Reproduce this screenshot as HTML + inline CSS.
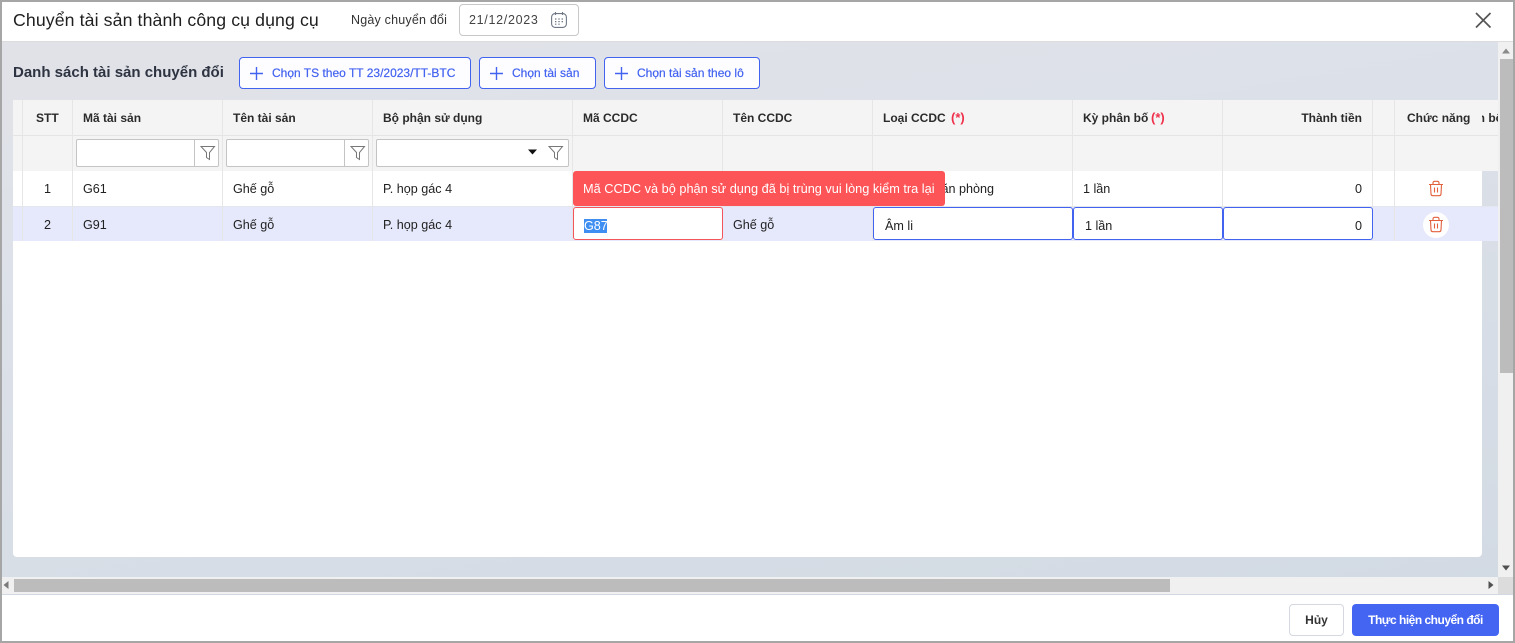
<!DOCTYPE html>
<html lang="vi"><head><meta charset="utf-8"><title>Chuyển tài sản thành công cụ dụng cụ</title>
<style>
*{box-sizing:border-box}
html,body{margin:0;padding:0;width:1515px;height:643px;overflow:hidden;background:#fff;font-family:"Liberation Sans",sans-serif;color:#212121}
.a{position:absolute}
.t{position:absolute;white-space:nowrap;font-size:12.6px;line-height:16px}
.b{font-weight:700;color:#2b2b2b;font-size:12px}
.btn{position:absolute;top:57px;height:32px;border:1px solid #4262f0;border-radius:4px;background:#fdfdff;color:#4262f0;font-size:12px;line-height:30px;white-space:nowrap;-webkit-text-stroke:.2px #4262f0}
.btn span{position:absolute;top:0}
.v{position:absolute;width:1px;background:#e6e6e6}
.inp{position:absolute;background:#fff;border:1px solid #c4c4c4;border-radius:2px}
.cell{position:absolute;top:207px;height:33px;background:#fff;border:1px solid #4262f0;border-radius:3px}
</style></head><body>
<div class="a" style="left:0;top:0;width:1515px;height:643px;background:#fff"></div>

<!-- body background -->
<div class="a" style="left:2px;top:41px;width:1511px;height:554px;background:linear-gradient(170deg,#e1e2e7 0%,#dde1e9 30%,#d2dae3 100%)"></div>
<div class="a" style="left:2px;top:41px;width:1511px;height:1px;background:#dcdcdc"></div>

<!-- header -->
<div class="t" style="left:13px;top:8px;font-size:17.7px;line-height:24px;color:#1f1f1f;letter-spacing:.11px">Chuyển tài sản thành công cụ dụng cụ</div>
<div class="t" style="left:351px;top:12px;font-size:12.5px;color:#333;letter-spacing:.2px">Ngày chuyển đổi</div>
<div class="a" style="left:459px;top:4px;width:120px;height:32px;border:1px solid #c8c8c8;border-radius:4px;background:#fff"></div>
<div class="t" style="left:469px;top:12px;font-size:12.5px;color:#444;letter-spacing:.7px">21/12/2023</div>
<svg class="a" style="left:550px;top:11px" width="18" height="18" viewBox="0 0 18 18" fill="none" stroke="#6f7785" stroke-width="1.1"><rect x="1.6" y="2.6" width="14.8" height="13.8" rx="3.5"/><path d="M5.500 1v3M12.500 1v3"/><path d="M5 8h1.400M8.300 8h1.400M11.600 8h1.400M5 10.600h1.400M8.300 10.600h1.400M11.600 10.600h1.400M5 13.200h1.400M8.300 13.200h1.400" stroke-width="1.2"/></svg>
<svg class="a" style="left:1474px;top:11px" width="18" height="18" viewBox="0 0 18 18" fill="none" stroke="#555" stroke-width="1.7"><path d="M2 2l14.500 14.500M16.500 2L2 16.500"/></svg>

<!-- toolbar -->
<div class="t" style="left:13px;top:64px;font-size:15px;line-height:17px;font-weight:700;color:#2d3340">Danh sách tài sản chuyển đổi</div>
<div class="btn" style="left:239px;width:232px"><svg class="a" style="left:8px;top:7px" width="17" height="17" fill="none" stroke="#4262f0" stroke-width="1.4"><path d="M8.500 2v13M2 8.500h13"/></svg><span style="left:32px">Chọn TS theo TT 23/2023/TT-BTC</span></div>
<div class="btn" style="left:479px;width:117px"><svg class="a" style="left:8px;top:7px" width="17" height="17" fill="none" stroke="#4262f0" stroke-width="1.4"><path d="M8.500 2v13M2 8.500h13"/></svg><span style="left:32px">Chọn tài sản</span></div>
<div class="btn" style="left:604px;width:156px"><svg class="a" style="left:8px;top:7px" width="17" height="17" fill="none" stroke="#4262f0" stroke-width="1.4"><path d="M8.500 2v13M2 8.500h13"/></svg><span style="left:32px">Chọn tài sản theo lô</span></div>

<!-- white panel -->
<div class="a" style="left:13px;top:171px;width:1469px;height:386px;background:#fff;border-radius:0 0 4px 4px"></div>
<!-- table head -->
<div class="a" style="left:13px;top:100px;width:1485px;height:71px;background:#f4f4f4"></div>
<div class="a" style="left:13px;top:135px;width:1485px;height:1px;background:#e4e4e4"></div>
<!-- row separators and selected row -->
<div class="a" style="left:13px;top:206px;width:1485px;height:1px;background:#e4e6ee"></div>
<div class="a" style="left:13px;top:207px;width:1485px;height:34px;background:#e6e9fb"></div>

<!-- column lines -->
<div class="v" style="left:22px;top:100px;height:141px"></div>
<div class="v" style="left:72px;top:100px;height:141px"></div>
<div class="v" style="left:222px;top:100px;height:141px"></div>
<div class="v" style="left:372px;top:100px;height:141px"></div>
<div class="v" style="left:572px;top:100px;height:141px"></div>
<div class="v" style="left:722px;top:100px;height:141px"></div>
<div class="v" style="left:872px;top:100px;height:141px"></div>
<div class="v" style="left:1072px;top:100px;height:141px"></div>
<div class="v" style="left:1222px;top:100px;height:141px"></div>
<div class="v" style="left:1372px;top:100px;height:141px"></div>
<div class="v" style="left:1394px;top:100px;height:141px"></div>

<!-- header text -->
<div class="t b" style="left:36px;top:110px">STT</div>
<div class="t b" style="left:83px;top:110px">Mã tài sản</div>
<div class="t b" style="left:233px;top:110px">Tên tài sản</div>
<div class="t b" style="left:383px;top:110px">Bộ phận sử dụng</div>
<div class="t b" style="left:583px;top:110px">Mã CCDC</div>
<div class="t b" style="left:733px;top:110px">Tên CCDC</div>
<div class="t b" style="left:883px;top:110px">Loại CCDC</div>
<div class="t b" style="left:951px;top:110px;color:#f0304a;font-size:13px">(*)</div>
<div class="t b" style="left:1083px;top:110px">Kỳ phân bố</div>
<div class="t b" style="left:1151px;top:110px;color:#f0304a;font-size:13px">(*)</div>
<div class="t b" style="right:153px;top:110px">Thành tiền</div>
<div class="t b" style="left:1407px;top:110px">Chức năng</div>
<div class="a" style="left:1482px;top:110px;width:16px;height:16px;overflow:hidden"><div class="t b" style="right:-5px;top:0">n bổ</div></div>

<!-- filters -->
<div class="inp" style="left:76px;top:139px;width:143px;height:28px"></div>
<div class="a" style="left:194px;top:140px;width:1px;height:26px;background:#c4c4c4"></div>
<div class="inp" style="left:226px;top:139px;width:143px;height:28px"></div>
<div class="a" style="left:344px;top:140px;width:1px;height:26px;background:#c4c4c4"></div>
<div class="inp" style="left:376px;top:139px;width:193px;height:28px"></div>
<svg class="a" style="left:200px;top:145px" width="16" height="16" fill="none" stroke="#777" stroke-width="1"><path d="M1 1.500h13.500L9.500 7.500v7L6.500 12.500v-5z"/></svg>
<svg class="a" style="left:350px;top:145px" width="16" height="16" fill="none" stroke="#777" stroke-width="1"><path d="M1 1.500h13.500L9.500 7.500v7L6.500 12.500v-5z"/></svg>
<svg class="a" style="left:548px;top:145px" width="16" height="16" fill="none" stroke="#777" stroke-width="1"><path d="M1 1.500h13.500L9.500 7.500v7L6.500 12.500v-5z"/></svg>
<svg class="a" style="left:528px;top:149px" width="9" height="6"><path d="M0 .5h9L4.500 5.500z" fill="#111"/></svg>

<!-- row 1 -->
<div class="t" style="left:44px;top:181px">1</div>
<div class="t" style="left:83px;top:181px">G61</div>
<div class="t" style="left:233px;top:181px">Ghế gỗ</div>
<div class="t" style="left:383px;top:181px">P. họp gác 4</div>
<div class="t" style="right:521px;top:181px">Thiết bị văn phòng</div>
<div class="t" style="left:1083px;top:181px">1 lần</div>
<div class="t" style="right:153px;top:181px">0</div>
<svg class="a" style="left:1428px;top:180px" width="16" height="17" viewBox="0 0 16 17" fill="none" stroke="#e2603c" stroke-width="1.1"><path d="M1 4.500h14M5 4.500V3q0-1.700 1.700-1.700h2.600Q11 1.300 11 3v1.500M2.500 4.500l.5 9.500q.2 1.700 1.800 1.700h6.400q1.600 0 1.800-1.700l.5-9.500M6.500 7.500v5M9.500 7.500v5"/></svg>

<!-- row 2 -->
<div class="t" style="left:44px;top:217px">2</div>
<div class="t" style="left:83px;top:217px">G91</div>
<div class="t" style="left:233px;top:217px">Ghế gỗ</div>
<div class="t" style="left:383px;top:217px">P. họp gác 4</div>
<div class="t" style="left:733px;top:217px">Ghế gỗ</div>

<div class="cell" style="left:573px;width:150px;border-color:#f4555a"></div>
<div class="a" style="left:584px;top:219px;width:23px;height:14px;background:#3f8ef2"></div>
<div class="t" style="left:584px;top:218px;color:#fff">G87</div>
<div class="cell" style="left:873px;width:200px"></div>
<div class="t" style="left:885px;top:218px">Âm li</div>
<div class="cell" style="left:1073px;width:150px"></div>
<div class="t" style="left:1085px;top:218px">1 lần</div>
<div class="cell" style="left:1223px;width:150px"></div>
<div class="t" style="right:153px;top:218px">0</div>
<div class="a" style="left:1423px;top:212px;width:26px;height:26px;border-radius:50%;background:#fff"></div>
<svg class="a" style="left:1428px;top:216px" width="16" height="17" viewBox="0 0 16 17" fill="none" stroke="#e2603c" stroke-width="1.1"><path d="M1 4.500h14M5 4.500V3q0-1.700 1.700-1.700h2.600Q11 1.300 11 3v1.500M2.500 4.500l.5 9.500q.2 1.700 1.800 1.700h6.400q1.600 0 1.800-1.700l.5-9.500M6.500 7.500v5M9.500 7.500v5"/></svg>

<!-- tooltip -->
<div class="a" style="left:573px;top:171px;width:372px;height:35px;background:#fd5457;border-radius:3px"></div>
<div class="t" style="left:583px;top:181px;color:#fff;font-size:12.75px">Mã CCDC và bộ phận sử dụng đã bị trùng vui lòng kiểm tra lại</div>

<!-- scrollbars -->
<div class="a" style="left:1498px;top:42px;width:15px;height:535px;background:#f0f0f0"></div>
<div class="a" style="left:1500px;top:59px;width:13px;height:314px;background:#bcbcbc"></div>
<svg class="a" style="left:1502px;top:48px" width="9" height="6"><path d="M0 5.500h8L4 .5z" fill="#8a8a8a"/></svg>
<svg class="a" style="left:1502px;top:565px" width="9" height="6"><path d="M0 .5h8L4 5.500z" fill="#505050"/></svg>
<div class="a" style="left:2px;top:577px;width:1496px;height:17px;background:#f0f0f0"></div>
<div class="a" style="left:14px;top:579px;width:1156px;height:13px;background:#bcbcbc"></div>
<svg class="a" style="left:3px;top:581px" width="6" height="9"><path d="M5.500 0v8L.5 4z" fill="#7a7a7a"/></svg>
<svg class="a" style="left:1488px;top:581px" width="6" height="9"><path d="M.5 0v8L5.500 4z" fill="#505050"/></svg>
<div class="a" style="left:1498px;top:577px;width:15px;height:17px;background:#dcdcdc"></div>
<div class="a" style="left:2px;top:594px;width:1511px;height:1px;background:#d3d9e2"></div>

<!-- footer -->
<div class="a" style="left:1289px;top:604px;width:55px;height:32px;border:1px solid #d5d8e0;border-radius:4px;background:#fff"></div>
<div class="t" style="left:1289px;width:55px;text-align:center;top:612px;font-size:12px;font-weight:700;color:#333">Hủy</div>
<div class="a" style="left:1352px;top:604px;width:147px;height:32px;border-radius:4px;background:#4365f2"></div>
<div class="t" style="left:1352px;width:147px;text-align:center;top:612px;font-size:12px;font-weight:700;color:#fff;letter-spacing:-.5px">Thực hiện chuyển đổi</div>

<!-- window border -->
<div class="a" style="left:0;top:0;width:1515px;height:643px;border:2px solid #a6a6a6"></div>
</body></html>
